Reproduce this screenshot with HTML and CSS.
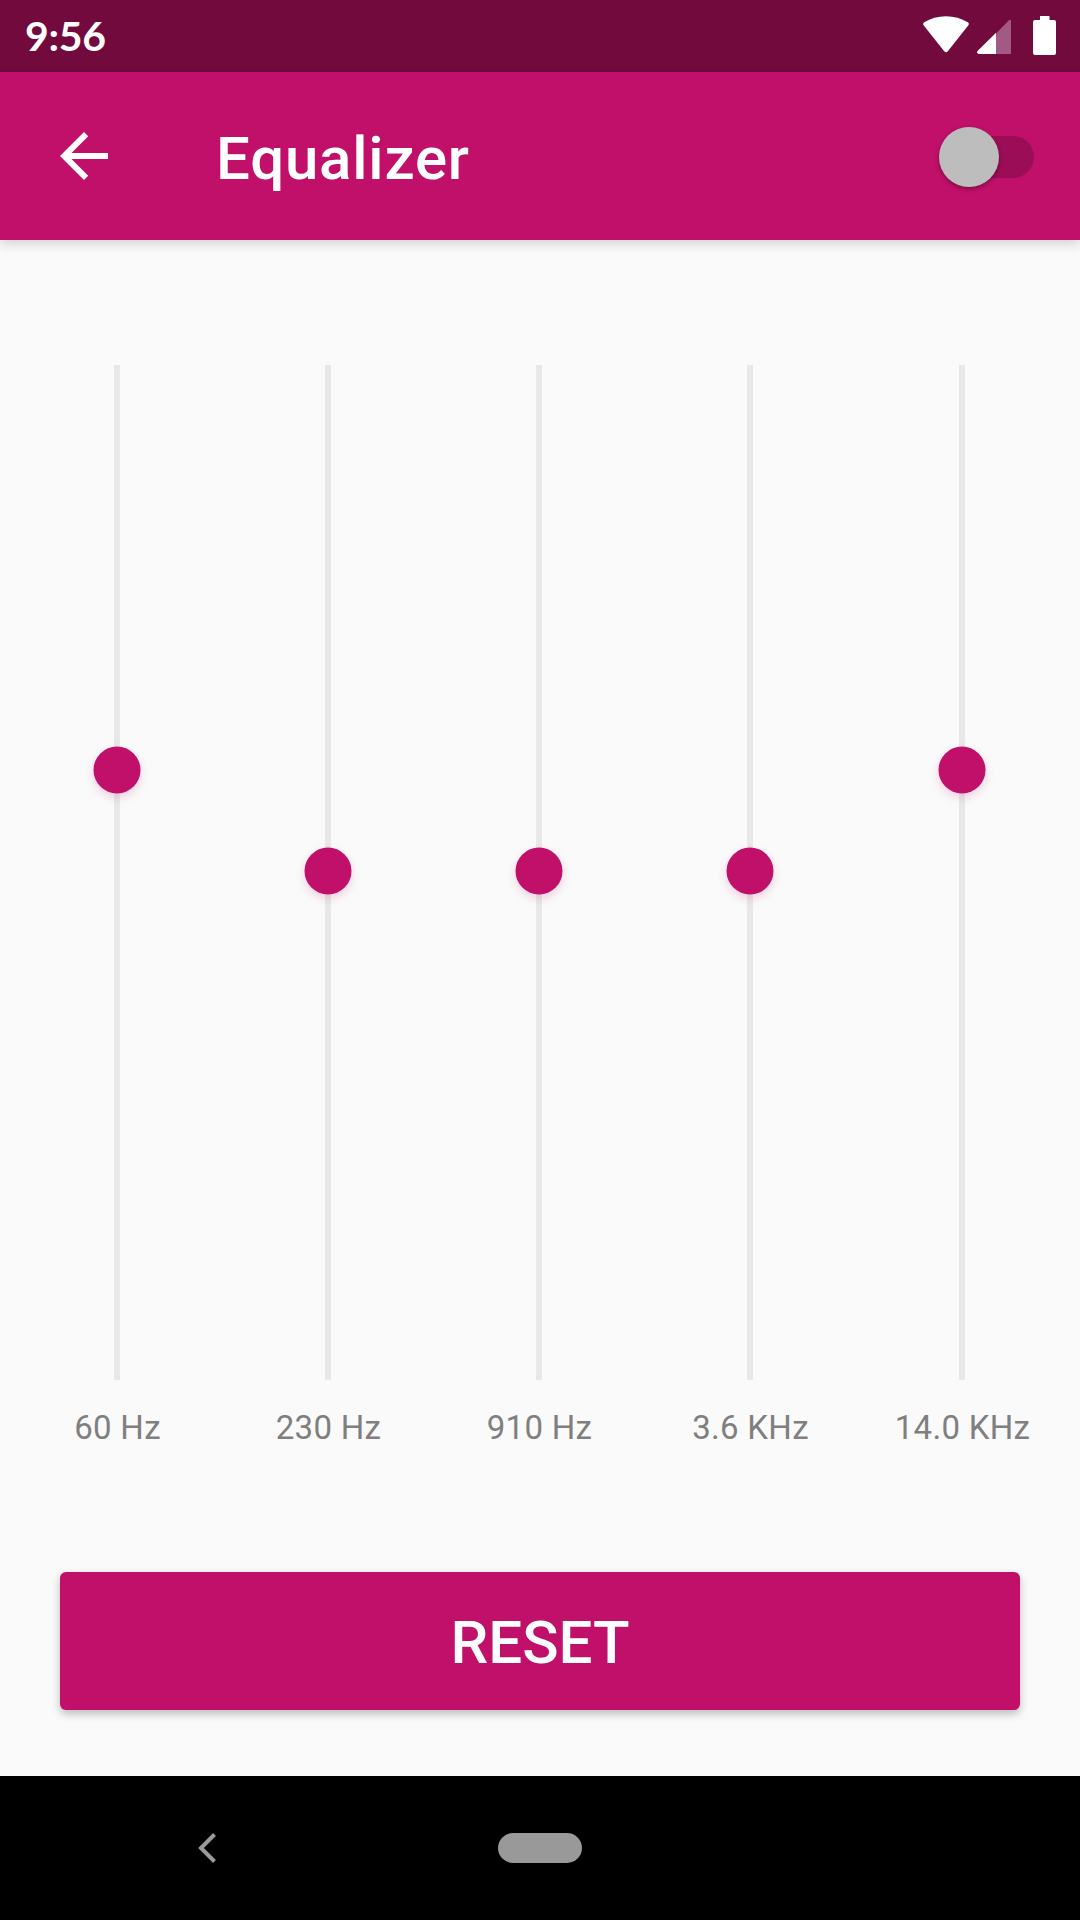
FILE: index.html
```html
<!DOCTYPE html>
<html lang="en">

<head>
    <meta charset="UTF-8">
    <meta name="viewport" content="width=device-width, initial-scale=1.0">
    <title>Equalizer</title>
    <link rel="stylesheet" href="styles.css">
</head>

<body>
    <div class="status-bar">
        <span class="time">9:56</span>
        <div class="status-icons">
            <svg class="wifi" width="46" height="37" viewBox="0 0 46 37">
                <path d="M1.2 6.3Q11 .3 23 .3t21.800 6q1.800 1.300.4 3.200L24.800 35.200q-1.800 2-3.600 0L.8 9.500q-1.400-1.900.4-3.200z" fill="#fff" />
            </svg>
            <svg class="signal" width="34" height="35" viewBox="0 0 34 35">
                <path d="M19 14.500L32 1.300Q34 0 34 2v33H19z" fill="#a25a85" />
                <path d="M19 13.800V35H2q-3-.8-1.500-3z" fill="#fff" />
            </svg>
            <svg class="battery" width="23" height="39" viewBox="0 0 23 39">
                <path d="M7 0h9.500v4H21q2 0 2 2v31q0 2-2 2H2q-2 0-2-2V6q0-2 2-2h5z" fill="#fff" />
            </svg>
        </div>
    </div>

    <header>
        <svg class="back" width="72" height="72" viewBox="0 0 24 24">
            <path d="M20 11H7.830l5.590-5.590L12 4l-8 8 8 8 1.410-1.410L7.830 13H20v-2z" fill="#fff" />
        </svg>
        <h1>Equalizer</h1>
        <div class="switch">
            <div class="switch-thumb"></div>
        </div>
    </header>

    <main>
        <div class="bands">
            <div class="band">
                <div class="slider">
                    <div class="thumb" style="top: 39.9%"></div>
                </div>
                <span class="label">60 Hz</span>
            </div>
            <div class="band">
                <div class="slider">
                    <div class="thumb" style="top: 49.85%"></div>
                </div>
                <span class="label">230 Hz</span>
            </div>
            <div class="band">
                <div class="slider">
                    <div class="thumb" style="top: 49.85%"></div>
                </div>
                <span class="label">910 Hz</span>
            </div>
            <div class="band">
                <div class="slider">
                    <div class="thumb" style="top: 49.85%"></div>
                </div>
                <span class="label">3.6 KHz</span>
            </div>
            <div class="band">
                <div class="slider">
                    <div class="thumb" style="top: 39.9%"></div>
                </div>
                <span class="label">14.0 KHz</span>
            </div>
        </div>
        <button class="reset-btn">RESET</button>
    </main>

    <nav>
        <svg class="nav-back" width="18" height="30" viewBox="0 0 18 30">
            <path d="M16.500 1.500L3 15l13.500 13.500" fill="none" stroke="#999" stroke-width="4" />
        </svg>
        <div class="nav-home"></div>
    </nav>
</body>

</html>
```
FILE: styles.css
```css
* {
    box-sizing: border-box;
}

body {
    font-family: Roboto, sans-serif;
    margin: 0;
    height: 1920px;
    display: flex;
    flex-direction: column;
    background-color: #fafafa;
    overflow: hidden;
}

.status-bar {
    height: 72px;
    padding: 0 24px 0 25px;
    display: flex;
    justify-content: space-between;
    background-color: #720a3e;
}

.time {
    font-family: Lato, sans-serif;
    font-weight: bold;
    font-size: 41px;
    line-height: 71px;
    letter-spacing: -0.3px;
    color: white;
}

.status-icons {
    display: flex;
    align-items: flex-start;
    padding-top: 16px;
}

.signal {
    margin: 3px 22px 0 8px;
}

header {
    height: 168px;
    padding: 0 46px 0 48px;
    display: flex;
    align-items: center;
    background-color: #c01069;
    color: white;
    box-shadow: 0 5px 10px rgba(0, 0, 0, 0.14);
}

header h1 {
    flex-grow: 1;
    margin: 0 0 0 96px;
    padding-top: 5px;
    font-size: 60px;
    font-weight: 500;
    line-height: 72px;
    letter-spacing: 0.8px;
}

.switch {
    position: relative;
    width: 90px;
    height: 42px;
    margin-top: 2px;
    border-radius: 21px;
    background-color: #9c0d58;
}

.switch-thumb {
    position: absolute;
    left: -5.5px;
    top: -9.5px;
    width: 60px;
    height: 60px;
    border-radius: 50%;
    background-color: #bdbdbd;
    box-shadow: 0 2px 4px rgba(0, 0, 0, 0.35);
}

main {
    flex-grow: 1;
    padding-top: 125px;
}

.bands {
    display: grid;
    grid-template-columns: repeat(4, 211px) 213px;
    padding-left: 11.5px;
}

.band {
    display: flex;
    flex-direction: column;
    align-items: center;
}

.slider {
    position: relative;
    width: 6px;
    height: 1015px;
    background-color: #e8e8e8;
}

.thumb {
    position: absolute;
    left: 2.5px;
    width: 47px;
    height: 47px;
    border-radius: 50%;
    background-color: #c01069;
    box-shadow: 0 4px 10px rgba(192, 16, 105, 0.18);
    transform: translate(-50%, -50%);
}

.label {
    margin-top: 28px;
    padding-left: 1px;
    font-size: 33px;
    line-height: 40px;
    letter-spacing: 0.3px;
    color: #7f7f7f;
}

.reset-btn {
    display: block;
    width: 960px;
    height: 138px;
    margin: 124px auto 0;
    padding: 3px 0 0;
    border: none;
    border-radius: 6px;
    background-color: #c01069;
    color: white;
    font-family: inherit;
    font-size: 60px;
    font-weight: 500;
    box-shadow: 0 4px 8px rgba(0, 0, 0, 0.25);
}

nav {
    height: 144px;
    padding-left: 198px;
    display: flex;
    align-items: center;
    background-color: black;
}

.nav-home {
    width: 84px;
    height: 30px;
    margin-left: 282px;
    border-radius: 15px;
    background-color: #999;
}
```
